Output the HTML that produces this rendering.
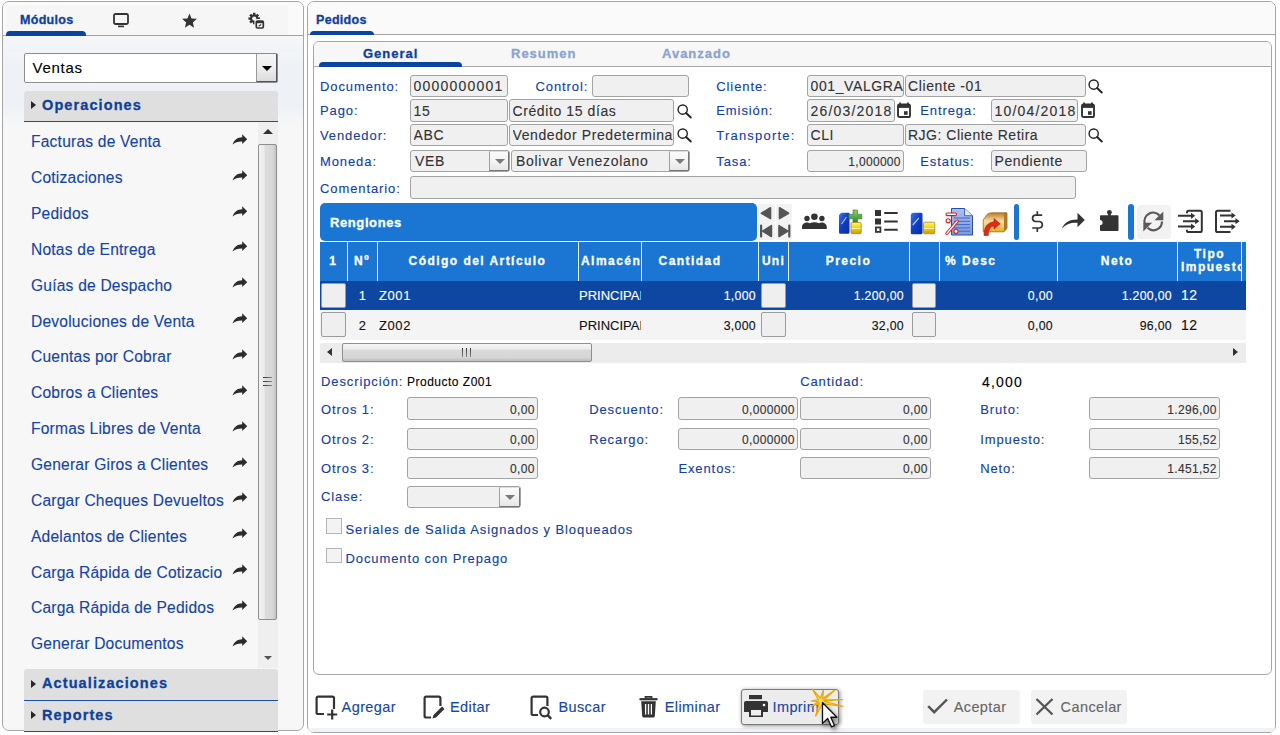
<!DOCTYPE html>
<html><head><meta charset="utf-8"><style>
*{box-sizing:border-box}
html,body{margin:0;padding:0}
body{width:1280px;height:735px;overflow:hidden;background:#fff;font-family:"Liberation Sans",sans-serif;position:relative}
.a{position:absolute}
.t{position:absolute;white-space:nowrap;line-height:1;-webkit-text-stroke:0.12px currentColor}
svg{position:absolute;overflow:visible}
.lbl{color:#1040a8}
.inp{background:#f0f0f0;border:1px solid #a3a3a3;border-radius:3px}
.cb{background:#efefef;border:1px solid #9c9c9c;border-radius:2px}
</style></head><body>
<div class="a " style="left:2px;top:1px;width:302px;height:730px;border:1px solid #a6a6a6;border-radius:7px;background:#f7f7f7;"></div>
<div class="a " style="left:3px;top:36px;width:300px;height:89px;background:linear-gradient(#f5f7f9 0%,#eef2f6 35%,#eef2f6 80%,#f7f7f7 100%);"></div>
<div class="a " style="left:3px;top:2px;width:300px;height:33px;background:#fafafa;border-radius:6px 6px 0 0;"></div>
<div class="a " style="left:6px;top:5px;width:80px;height:30px;background:#f6f6f6;"></div>
<div class="a " style="left:86px;top:5px;width:68px;height:30px;background:#f6f6f6;"></div>
<div class="a " style="left:154px;top:5px;width:69px;height:30px;background:#f6f6f6;"></div>
<div class="a " style="left:223px;top:5px;width:65px;height:30px;background:#f6f6f6;"></div>
<div class="a " style="left:3px;top:35px;width:300px;height:1px;background:#a3a3a3;"></div>
<div class="a " style="left:6px;top:31px;width:80px;height:5px;background:#0b44a0;border-radius:4px 4px 0 0;"></div>
<div class="t " style="left:20.00px;top:14.02px;font-size:12.5px;color:#0f3f9c;font-weight:bold;-webkit-text-stroke:0.3px currentColor;letter-spacing:0.3px;">Módulos</div>
<svg style="left:113px;top:13px" width="16" height="15" viewBox="0 0 16 15"><rect x="1" y="1" width="14" height="10" rx="1.5" fill="none" stroke="#333" stroke-width="1.8"/><rect x="5" y="12.6" width="6" height="1.6" fill="#333"/></svg>
<svg style="left:181px;top:12px" width="17" height="17" viewBox="0 0 24 24"><path d="M12 2l2.9 7.1 7.6.6-5.8 5 1.8 7.4L12 18.1 5.5 22.1l1.8-7.4-5.8-5 7.6-.6z" fill="#333"/></svg>
<svg style="left:248px;top:12px" width="17" height="17" viewBox="0 0 17 17"><path d="M10.34 5.45 L11.96 5.34 L11.96 7.86 L10.34 7.75 L9.94 8.72 L11.17 9.78 L9.38 11.57 L8.32 10.34 L7.35 10.74 L7.46 12.36 L4.94 12.36 L5.05 10.74 L4.08 10.34 L3.02 11.57 L1.23 9.78 L2.46 8.72 L2.06 7.75 L0.44 7.86 L0.44 5.34 L2.06 5.45 L2.46 4.48 L1.23 3.42 L3.02 1.63 L4.08 2.86 L5.05 2.46 L4.94 0.84 L7.46 0.84 L7.35 2.46 L8.32 2.86 L9.38 1.63 L11.17 3.42 L9.94 4.48Z" fill="#333"/><circle cx="6.2" cy="6.6" r="2.1" fill="#f3f3f3"/><rect x="7.5" y="8.2" width="8.6" height="8.6" rx="1.5" fill="#f3f3f3" stroke="#f3f3f3" stroke-width="2.2"/><rect x="8.3" y="9" width="7" height="7" rx="1.2" fill="#fff" stroke="#333" stroke-width="1.7"/><rect x="8.3" y="9" width="7" height="2.2" fill="#333"/><path d="M10.6 14.2l2.6-1.6" stroke="#333" stroke-width="1.2"/></svg>
<div class="a " style="left:24px;top:53px;width:254px;height:30px;background:#fff;border:1px solid #8d8d8d;border-radius:2px;"></div>
<div class="a " style="left:256px;top:54px;width:21px;height:28px;background:linear-gradient(#f4f4f4,#f0f0f0 45%,#dcdcdc);border-left:1px solid #9a9a9a;border-right:1px solid #555;border-bottom:1px solid #555;"></div>
<div class="a" style="left:262px;top:66px;width:0;height:0;border-left:5px solid transparent;border-right:5px solid transparent;border-top:5px solid #000"></div>
<div class="t " style="left:32.50px;top:60.20px;font-size:15px;color:#000;letter-spacing:0.75px;">Ventas</div>
<div class="a " style="left:24px;top:91px;width:254px;height:31px;background:#dfdfdf;border-radius:3px 3px 0 0;"></div>
<div class="a " style="left:24px;top:121px;width:254px;height:1px;background:#1b4ea6;"></div>
<div class="a" style="left:31px;top:101px;width:0;height:0;border-top:4.5px solid transparent;border-bottom:4.5px solid transparent;border-left:5px solid #262626"></div>
<div class="t " style="left:42.00px;top:97.73px;font-size:14.5px;color:#0f3f9c;font-weight:bold;-webkit-text-stroke:0.3px currentColor;letter-spacing:1.1px;">Operaciones</div>
<div class="t " style="left:31.00px;top:134.39px;font-size:15.6px;color:#1444a6;letter-spacing:0.2px;">Facturas de Venta</div>
<svg style="left:232px;top:133.8px" width="16" height="11" viewBox="0 0 16 11"><path d="M0.5 10.5C2 6 5.5 3.2 10.2 3.2V0.2L15.2 5.3 10.2 9.9V7.4C6 7.3 3 8.3 0.5 10.5z" fill="#2b2b2b"/></svg>
<div class="t " style="left:31.00px;top:170.24px;font-size:15.6px;color:#1444a6;letter-spacing:0.2px;">Cotizaciones</div>
<svg style="left:232px;top:169.7px" width="16" height="11" viewBox="0 0 16 11"><path d="M0.5 10.5C2 6 5.5 3.2 10.2 3.2V0.2L15.2 5.3 10.2 9.9V7.4C6 7.3 3 8.3 0.5 10.5z" fill="#2b2b2b"/></svg>
<div class="t " style="left:31.00px;top:206.09px;font-size:15.6px;color:#1444a6;letter-spacing:0.2px;">Pedidos</div>
<svg style="left:232px;top:205.5px" width="16" height="11" viewBox="0 0 16 11"><path d="M0.5 10.5C2 6 5.5 3.2 10.2 3.2V0.2L15.2 5.3 10.2 9.9V7.4C6 7.3 3 8.3 0.5 10.5z" fill="#2b2b2b"/></svg>
<div class="t " style="left:31.00px;top:241.94px;font-size:15.6px;color:#1444a6;letter-spacing:0.2px;">Notas de Entrega</div>
<svg style="left:232px;top:241.4px" width="16" height="11" viewBox="0 0 16 11"><path d="M0.5 10.5C2 6 5.5 3.2 10.2 3.2V0.2L15.2 5.3 10.2 9.9V7.4C6 7.3 3 8.3 0.5 10.5z" fill="#2b2b2b"/></svg>
<div class="t " style="left:31.00px;top:277.79px;font-size:15.6px;color:#1444a6;letter-spacing:0.2px;">Guías de Despacho</div>
<svg style="left:232px;top:277.2px" width="16" height="11" viewBox="0 0 16 11"><path d="M0.5 10.5C2 6 5.5 3.2 10.2 3.2V0.2L15.2 5.3 10.2 9.9V7.4C6 7.3 3 8.3 0.5 10.5z" fill="#2b2b2b"/></svg>
<div class="t " style="left:31.00px;top:313.64px;font-size:15.6px;color:#1444a6;letter-spacing:0.2px;">Devoluciones de Venta</div>
<svg style="left:232px;top:313.1px" width="16" height="11" viewBox="0 0 16 11"><path d="M0.5 10.5C2 6 5.5 3.2 10.2 3.2V0.2L15.2 5.3 10.2 9.9V7.4C6 7.3 3 8.3 0.5 10.5z" fill="#2b2b2b"/></svg>
<div class="t " style="left:31.00px;top:349.49px;font-size:15.6px;color:#1444a6;letter-spacing:0.2px;">Cuentas por Cobrar</div>
<svg style="left:232px;top:348.9px" width="16" height="11" viewBox="0 0 16 11"><path d="M0.5 10.5C2 6 5.5 3.2 10.2 3.2V0.2L15.2 5.3 10.2 9.9V7.4C6 7.3 3 8.3 0.5 10.5z" fill="#2b2b2b"/></svg>
<div class="t " style="left:31.00px;top:385.34px;font-size:15.6px;color:#1444a6;letter-spacing:0.2px;">Cobros a Clientes</div>
<svg style="left:232px;top:384.8px" width="16" height="11" viewBox="0 0 16 11"><path d="M0.5 10.5C2 6 5.5 3.2 10.2 3.2V0.2L15.2 5.3 10.2 9.9V7.4C6 7.3 3 8.3 0.5 10.5z" fill="#2b2b2b"/></svg>
<div class="t " style="left:31.00px;top:421.19px;font-size:15.6px;color:#1444a6;letter-spacing:0.2px;">Formas Libres de Venta</div>
<svg style="left:232px;top:420.6px" width="16" height="11" viewBox="0 0 16 11"><path d="M0.5 10.5C2 6 5.5 3.2 10.2 3.2V0.2L15.2 5.3 10.2 9.9V7.4C6 7.3 3 8.3 0.5 10.5z" fill="#2b2b2b"/></svg>
<div class="t " style="left:31.00px;top:457.04px;font-size:15.6px;color:#1444a6;letter-spacing:0.2px;">Generar Giros a Clientes</div>
<svg style="left:232px;top:456.5px" width="16" height="11" viewBox="0 0 16 11"><path d="M0.5 10.5C2 6 5.5 3.2 10.2 3.2V0.2L15.2 5.3 10.2 9.9V7.4C6 7.3 3 8.3 0.5 10.5z" fill="#2b2b2b"/></svg>
<div class="t " style="left:31.00px;top:492.89px;font-size:15.6px;color:#1444a6;letter-spacing:0.2px;">Cargar Cheques Devueltos</div>
<svg style="left:232px;top:492.3px" width="16" height="11" viewBox="0 0 16 11"><path d="M0.5 10.5C2 6 5.5 3.2 10.2 3.2V0.2L15.2 5.3 10.2 9.9V7.4C6 7.3 3 8.3 0.5 10.5z" fill="#2b2b2b"/></svg>
<div class="t " style="left:31.00px;top:528.74px;font-size:15.6px;color:#1444a6;letter-spacing:0.2px;">Adelantos de Clientes</div>
<svg style="left:232px;top:528.2px" width="16" height="11" viewBox="0 0 16 11"><path d="M0.5 10.5C2 6 5.5 3.2 10.2 3.2V0.2L15.2 5.3 10.2 9.9V7.4C6 7.3 3 8.3 0.5 10.5z" fill="#2b2b2b"/></svg>
<div class="t " style="left:31.00px;top:564.59px;font-size:15.6px;color:#1444a6;letter-spacing:0.2px;">Carga Rápida de Cotizacio</div>
<svg style="left:232px;top:564.0px" width="16" height="11" viewBox="0 0 16 11"><path d="M0.5 10.5C2 6 5.5 3.2 10.2 3.2V0.2L15.2 5.3 10.2 9.9V7.4C6 7.3 3 8.3 0.5 10.5z" fill="#2b2b2b"/></svg>
<div class="t " style="left:31.00px;top:600.44px;font-size:15.6px;color:#1444a6;letter-spacing:0.2px;">Carga Rápida de Pedidos</div>
<svg style="left:232px;top:599.9px" width="16" height="11" viewBox="0 0 16 11"><path d="M0.5 10.5C2 6 5.5 3.2 10.2 3.2V0.2L15.2 5.3 10.2 9.9V7.4C6 7.3 3 8.3 0.5 10.5z" fill="#2b2b2b"/></svg>
<div class="t " style="left:31.00px;top:636.29px;font-size:15.6px;color:#1444a6;letter-spacing:0.2px;">Generar Documentos</div>
<svg style="left:232px;top:635.7px" width="16" height="11" viewBox="0 0 16 11"><path d="M0.5 10.5C2 6 5.5 3.2 10.2 3.2V0.2L15.2 5.3 10.2 9.9V7.4C6 7.3 3 8.3 0.5 10.5z" fill="#2b2b2b"/></svg>
<div class="a " style="left:258px;top:122px;width:20px;height:546px;background:#efefef;"></div>
<div class="a" style="left:263px;top:129px;width:0;height:0;border-left:5px solid transparent;border-right:5px solid transparent;border-bottom:5px solid #333"></div>
<div class="a " style="left:258px;top:144px;width:19px;height:476px;background:linear-gradient(90deg,#f2f2f2,#ececec 30%,#dcdcdc 36%,#d8d8d8 80%,#c6c6c6 95%);border:1px solid #8f8f8f;border-radius:2px;"></div>
<div class="a " style="left:263px;top:377px;width:9px;height:1px;background:linear-gradient(90deg,#333,#888);"></div>
<div class="a " style="left:263px;top:381px;width:9px;height:1px;background:linear-gradient(90deg,#333,#888);"></div>
<div class="a " style="left:263px;top:385px;width:9px;height:1px;background:linear-gradient(90deg,#333,#888);"></div>
<div class="a" style="left:263.5px;top:656px;width:0;height:0;border-left:4.5px solid transparent;border-right:4.5px solid transparent;border-top:4.5px solid #555"></div>
<div class="a " style="left:24px;top:669px;width:254px;height:32px;background:#dfdfdf;border-radius:3px 3px 0 0;"></div>
<div class="a " style="left:24px;top:700px;width:254px;height:1px;background:#1b4ea6;"></div>
<div class="a" style="left:31px;top:679.6px;width:0;height:0;border-top:4.5px solid transparent;border-bottom:4.5px solid transparent;border-left:5px solid #262626"></div>
<div class="t " style="left:42.00px;top:676.33px;font-size:14.5px;color:#0f3f9c;font-weight:bold;-webkit-text-stroke:0.3px currentColor;letter-spacing:1.1px;">Actualizaciones</div>
<div class="a " style="left:24px;top:701px;width:254px;height:31px;background:#dfdfdf;border-radius:3px 3px 0 0;"></div>
<div class="a " style="left:24px;top:731px;width:254px;height:1px;background:#1b4ea6;"></div>
<div class="a" style="left:31px;top:711.4px;width:0;height:0;border-top:4.5px solid transparent;border-bottom:4.5px solid transparent;border-left:5px solid #262626"></div>
<div class="t " style="left:42.00px;top:708.13px;font-size:14.5px;color:#0f3f9c;font-weight:bold;-webkit-text-stroke:0.3px currentColor;letter-spacing:1.1px;">Reportes</div>
<div class="a " style="left:307px;top:1px;width:969px;height:732px;border:1px solid #a6a6a6;border-radius:7px;background:#fff;"></div>
<div class="a " style="left:308px;top:2px;width:967px;height:32px;background:#fafafa;border-radius:6px 6px 0 0;"></div>
<div class="a " style="left:308px;top:34px;width:967px;height:1px;background:#a3a3a3;"></div>
<div class="a " style="left:308px;top:728px;width:967px;height:4px;background:#eff2f6;border-radius:0 0 6px 6px;"></div>
<div class="a " style="left:310px;top:31px;width:64px;height:4px;background:#0b44a0;border-radius:4px 4px 0 0;"></div>
<div class="t " style="left:316.00px;top:14.02px;font-size:12.5px;color:#0f3f9c;font-weight:bold;-webkit-text-stroke:0.3px currentColor;letter-spacing:0.3px;">Pedidos</div>
<div class="a " style="left:313px;top:41px;width:959px;height:634px;border:1px solid #a6a6a6;border-radius:6px;background:#fff;"></div>
<div class="a " style="left:314px;top:42px;width:957px;height:24px;background:#f7f7f7;border-radius:5px 5px 0 0;"></div>
<div class="a " style="left:314px;top:66px;width:957px;height:1px;background:#a8a8a8;"></div>
<div class="a " style="left:319px;top:62px;width:143px;height:5px;background:#0b44a0;border-radius:4px 4px 0 0;"></div>
<div class="t " style="left:363.00px;top:46.80px;font-size:13px;color:#0f3f9c;font-weight:bold;-webkit-text-stroke:0.3px currentColor;letter-spacing:1.0px;">General</div>
<div class="t " style="left:511.00px;top:46.80px;font-size:13px;color:#8aa3d1;font-weight:bold;-webkit-text-stroke:0.3px currentColor;letter-spacing:1.0px;">Resumen</div>
<div class="t " style="left:662.00px;top:46.80px;font-size:13px;color:#8aa3d1;font-weight:bold;-webkit-text-stroke:0.3px currentColor;letter-spacing:1.0px;">Avanzado</div>
<div class="t lbl" style="left:320.00px;top:80.00px;font-size:13px;letter-spacing:0.9px;">Documento:</div>
<div class="t lbl" style="left:320.00px;top:104.00px;font-size:13px;letter-spacing:0.9px;">Pago:</div>
<div class="t lbl" style="left:320.00px;top:128.80px;font-size:13px;letter-spacing:0.9px;">Vendedor:</div>
<div class="t lbl" style="left:320.00px;top:154.70px;font-size:13px;letter-spacing:0.9px;">Moneda:</div>
<div class="t lbl" style="left:320.00px;top:182.00px;font-size:13px;letter-spacing:0.9px;">Comentario:</div>
<div class="t lbl" style="left:535.50px;top:80.00px;font-size:13px;letter-spacing:0.9px;">Control:</div>
<div class="t lbl" style="left:716.30px;top:80.00px;font-size:13px;letter-spacing:0.9px;">Cliente:</div>
<div class="t lbl" style="left:716.30px;top:104.00px;font-size:13px;letter-spacing:0.9px;">Emisión:</div>
<div class="t lbl" style="left:716.30px;top:128.80px;font-size:13px;letter-spacing:1.2px;">Transporte:</div>
<div class="t lbl" style="left:716.30px;top:154.70px;font-size:13px;letter-spacing:0.9px;">Tasa:</div>
<div class="t lbl" style="left:920.30px;top:104.00px;font-size:13px;letter-spacing:0.9px;">Entrega:</div>
<div class="t lbl" style="left:920.30px;top:154.70px;font-size:13px;letter-spacing:0.9px;">Estatus:</div>
<div class="a inp" style="left:410px;top:75px;width:98px;height:22px;"></div>
<div class="t " style="left:413.50px;top:77.39px;font-size:14px;line-height:1.4;width:93px;overflow:hidden;color:#333333;letter-spacing:1.2px;">0000000001</div>
<div class="a inp" style="left:592px;top:75px;width:97px;height:22px;"></div>
<div class="a inp" style="left:807px;top:75px;width:97px;height:22px;"></div>
<div class="t " style="left:810.50px;top:77.39px;font-size:14px;line-height:1.4;width:92px;overflow:hidden;color:#333333;letter-spacing:0.6px;">001_VALGRA</div>
<div class="a inp" style="left:905px;top:75px;width:181px;height:22px;"></div>
<div class="t " style="left:908.00px;top:77.39px;font-size:14px;line-height:1.4;width:176px;overflow:hidden;color:#333333;letter-spacing:0.6px;">Cliente -01</div>
<svg style="left:1088px;top:79px" width="15" height="14" viewBox="0 0 15 14"><circle cx="5.7" cy="5.6" r="4.6" fill="none" stroke="#222" stroke-width="1.4"/><path d="M9.1 9L13.8 13.5" stroke="#222" stroke-width="1.9" stroke-linecap="round"/></svg>
<div class="a inp" style="left:410px;top:99px;width:98px;height:23px;"></div>
<div class="t " style="left:413.50px;top:101.89px;font-size:14px;line-height:1.4;width:93px;overflow:hidden;color:#333333;letter-spacing:0.6px;">15</div>
<div class="a inp" style="left:509px;top:99px;width:165px;height:23px;"></div>
<div class="t " style="left:512.50px;top:101.89px;font-size:14px;line-height:1.4;width:160px;overflow:hidden;color:#333333;letter-spacing:0.6px;">Crédito 15 días</div>
<svg style="left:677px;top:104px" width="15" height="14" viewBox="0 0 15 14"><circle cx="5.7" cy="5.6" r="4.6" fill="none" stroke="#222" stroke-width="1.4"/><path d="M9.1 9L13.8 13.5" stroke="#222" stroke-width="1.9" stroke-linecap="round"/></svg>
<div class="a inp" style="left:807px;top:99px;width:88px;height:23px;"></div>
<div class="t " style="left:810.50px;top:101.89px;font-size:14px;line-height:1.4;width:83px;overflow:hidden;color:#333333;letter-spacing:1.2px;">26/03/2018</div>
<svg style="left:897px;top:102px" width="14" height="16" viewBox="0 0 14 16"><path d="M3 0.5v2.5M11 0.5v2.5" stroke="#333" stroke-width="1.8"/><rect x="1" y="2.5" width="12" height="12.5" rx="1.6" fill="none" stroke="#333" stroke-width="1.9"/><rect x="1" y="2.5" width="12" height="3.4" fill="#333"/><rect x="7" y="9.2" width="3.6" height="3.6" fill="#333"/></svg>
<div class="a inp" style="left:991px;top:99px;width:87px;height:23px;"></div>
<div class="t " style="left:994.50px;top:101.89px;font-size:14px;line-height:1.4;width:82px;overflow:hidden;color:#333333;letter-spacing:1.2px;">10/04/2018</div>
<svg style="left:1081px;top:102px" width="14" height="16" viewBox="0 0 14 16"><path d="M3 0.5v2.5M11 0.5v2.5" stroke="#333" stroke-width="1.8"/><rect x="1" y="2.5" width="12" height="12.5" rx="1.6" fill="none" stroke="#333" stroke-width="1.9"/><rect x="1" y="2.5" width="12" height="3.4" fill="#333"/><rect x="7" y="9.2" width="3.6" height="3.6" fill="#333"/></svg>
<div class="a inp" style="left:410px;top:124px;width:98px;height:22px;"></div>
<div class="t " style="left:413.50px;top:126.39px;font-size:14px;line-height:1.4;width:93px;overflow:hidden;color:#333333;letter-spacing:0.6px;">ABC</div>
<div class="a inp" style="left:509px;top:124px;width:165px;height:22px;"></div>
<div class="t " style="left:512.50px;top:126.39px;font-size:14px;line-height:1.4;width:160px;overflow:hidden;color:#333333;letter-spacing:0.6px;">Vendedor Predeterminado</div>
<svg style="left:677px;top:128px" width="15" height="14" viewBox="0 0 15 14"><circle cx="5.7" cy="5.6" r="4.6" fill="none" stroke="#222" stroke-width="1.4"/><path d="M9.1 9L13.8 13.5" stroke="#222" stroke-width="1.9" stroke-linecap="round"/></svg>
<div class="a inp" style="left:807px;top:124px;width:97px;height:22px;"></div>
<div class="t " style="left:810.50px;top:126.39px;font-size:14px;line-height:1.4;width:92px;overflow:hidden;color:#333333;letter-spacing:0.6px;">CLI</div>
<div class="a inp" style="left:905px;top:124px;width:181px;height:22px;"></div>
<div class="t " style="left:908.00px;top:126.39px;font-size:14px;line-height:1.4;width:176px;overflow:hidden;color:#333333;letter-spacing:0.5px;">RJG: Cliente Retira</div>
<svg style="left:1088px;top:128px" width="15" height="14" viewBox="0 0 15 14"><circle cx="5.7" cy="5.6" r="4.6" fill="none" stroke="#222" stroke-width="1.4"/><path d="M9.1 9L13.8 13.5" stroke="#222" stroke-width="1.9" stroke-linecap="round"/></svg>
<div class="a inp" style="left:410px;top:150px;width:100px;height:22px;"></div>
<div class="a " style="left:489px;top:151px;width:20px;height:20px;background:linear-gradient(#fafafa,#f4f4f4 50%,#e6e6e6);border-left:1px solid #9f9f9f;border-right:1px solid #777;border-bottom:1px solid #777;border-top:1px solid #ddd;"></div>
<div class="a" style="left:494.5px;top:158.5px;width:0;height:0;border-left:5px solid transparent;border-right:5px solid transparent;border-top:5.5px solid #7a7a7a"></div>
<div class="t " style="left:415.00px;top:154.15px;font-size:14px;color:#333333;letter-spacing:0.7px;">VEB</div>
<div class="a inp" style="left:511px;top:150px;width:179px;height:22px;"></div>
<div class="a " style="left:669px;top:151px;width:20px;height:20px;background:linear-gradient(#fafafa,#f4f4f4 50%,#e6e6e6);border-left:1px solid #9f9f9f;border-right:1px solid #777;border-bottom:1px solid #777;border-top:1px solid #ddd;"></div>
<div class="a" style="left:674.5px;top:158.5px;width:0;height:0;border-left:5px solid transparent;border-right:5px solid transparent;border-top:5.5px solid #7a7a7a"></div>
<div class="t " style="left:516.00px;top:154.15px;font-size:14px;color:#333333;letter-spacing:0.7px;">Bolivar Venezolano</div>
<div class="a inp" style="left:807px;top:150px;width:97px;height:22px;"></div>
<div class="t " style="right:379.20px;top:156.16px;font-size:12px;color:#333333;letter-spacing:0.3px;">1,000000</div>
<div class="a inp" style="left:991px;top:150px;width:96px;height:22px;"></div>
<div class="t " style="left:994.50px;top:152.39px;font-size:14px;line-height:1.4;width:91px;overflow:hidden;color:#333333;letter-spacing:0.6px;">Pendiente</div>
<div class="a inp" style="left:410px;top:176px;width:666px;height:23px;"></div>
<div class="a " style="left:320px;top:203px;width:437px;height:38px;background:#1b76d3;border-radius:5px;"></div>
<div class="t " style="left:330.00px;top:215.90px;font-size:13px;color:#fff;font-weight:bold;-webkit-text-stroke:0.3px currentColor;letter-spacing:0.6px;">Renglones</div>
<div class="a " style="left:758px;top:204px;width:16.5px;height:17.5px;background:#f2f2f2;border-radius:2px;"></div>
<div class="a " style="left:775.5px;top:204px;width:16.5px;height:17.5px;background:#f2f2f2;border-radius:2px;"></div>
<div class="a " style="left:758px;top:222px;width:16.5px;height:17.5px;background:#f2f2f2;border-radius:2px;"></div>
<div class="a " style="left:775.5px;top:222px;width:16.5px;height:17.5px;background:#f2f2f2;border-radius:2px;"></div>
<svg style="left:758px;top:204px" width="34" height="36" viewBox="0 0 34 36"><g fill="#555" stroke="#555" stroke-width="1.6" stroke-linejoin="round"><path d="M12.5 3.8v10.8L3.4 9.2z"/><path d="M21.5 3.8v10.8l9.1-5.4z"/><path d="M13.4 21.7v10.8L4.6 27.1z"/><path d="M21 21.7v10.8l9-5.4z"/></g><path d="M3.1 21.6v11M31.3 21.6v11" stroke="#555" stroke-width="2.2" stroke-linecap="round"/></svg>
<svg style="left:801px;top:213px" width="27" height="17" viewBox="0 0 27 17"><circle cx="6" cy="5.5" r="2.7" fill="#333"/><circle cx="13.4" cy="3.8" r="3.3" fill="#333"/><circle cx="20.9" cy="5.5" r="2.7" fill="#333"/><path d="M1 16V14.3C1 11.4 3.3 9.6 6.2 9.6c1 0 1.9.2 2.6.6C10 9.6 11.6 9.3 13.4 9.3s3.4.3 4.6.9c.7-.4 1.6-.6 2.6-.6 2.9 0 5.2 1.8 5.2 4.7V16z" fill="#333"/></svg>
<svg style="left:0;top:0" width="0" height="0"><defs>
<linearGradient id="gb" x1="0" y1="0" x2="1" y2="1"><stop offset="0" stop-color="#3a78f0"/><stop offset=".45" stop-color="#1140c8"/><stop offset="1" stop-color="#0a2c98"/></linearGradient>
<linearGradient id="gy" x1="0" y1="0" x2="0" y2="1"><stop offset="0" stop-color="#fff27a"/><stop offset=".5" stop-color="#f4d400"/><stop offset="1" stop-color="#c89a10"/></linearGradient>
<linearGradient id="gg" x1="0" y1="0" x2="0" y2="1"><stop offset="0" stop-color="#8ed46a"/><stop offset="1" stop-color="#2f8a2a"/></linearGradient>
<linearGradient id="go" x1="0" y1="0" x2="0" y2="1"><stop offset="0" stop-color="#c07a28"/><stop offset=".45" stop-color="#f6e0a0"/><stop offset="1" stop-color="#e8b020"/></linearGradient>
<linearGradient id="gd" x1="0" y1="0" x2="0" y2="1"><stop offset="0" stop-color="#a9c0f0"/><stop offset="1" stop-color="#7b9be0"/></linearGradient>
</defs></svg>
<svg style="left:838px;top:209px" width="26" height="26" viewBox="0 0 26 26"><path d="M2.5 4.5Q3 3.8 5 3.8h5.5Q11.5 3.8 11.5 5v18.5q0 1.3-1.5 1.3H2.3Q1 24.8 1 23.5V6z" fill="url(#gb)"/><path d="M3.5 15l5-7" stroke="#a8c8ff" stroke-width="1.2"/><path d="M15 1h4.5v4.3h4.3v4.5h-4.3v3.2H15V9.8h-4.2V5.3H15z" fill="url(#gg)" stroke="#2c6f2a" stroke-width=".6"/><rect x="13" y="13.5" width="10.2" height="11.2" rx="1.2" fill="url(#gy)" stroke="#a8842a" stroke-width=".8"/><path d="M13.5 19.5h9" stroke="#fff6b0" stroke-width="1"/></svg>
<svg style="left:875px;top:210px" width="23" height="23" viewBox="0 0 23 23"><rect x="0" y="0" width="6" height="6" fill="#333"/><rect x="0" y="8.5" width="6" height="6" fill="#333"/><rect x="0.9" y="17.4" width="4.5" height="4.5" fill="none" stroke="#333" stroke-width="1.8"/><path d="M9.2 3h13.5M9.2 11.5h13.5M9.2 19.8h13.5" stroke="#333" stroke-width="2"/></svg>
<svg style="left:910px;top:212px" width="26" height="23" viewBox="0 0 26 23"><path d="M1.5 1.6Q2 .8 4 .8h6.5Q12.5 .8 12.5 2.2v18.8q0 1.3-1.5 1.3H2.3Q.8 22.3.8 21V3z" fill="url(#gb)"/><path d="M2.8 13l6-7" stroke="#a8c8ff" stroke-width="1.2"/><rect x="13.5" y="10.2" width="11.3" height="11.6" rx="1.2" fill="url(#gy)" stroke="#a8842a" stroke-width=".8"/><path d="M14 16.5h10" stroke="#fff6b0" stroke-width="1"/></svg>
<svg style="left:945px;top:208px" width="29" height="28" viewBox="0 0 29 28"><path d="M6.5 .5h13l8 7.2v19.3h-21z" fill="url(#gd)" stroke="#2a4ea8" stroke-width="1"/><path d="M19.5 .5v7.2h8" fill="#dfe8fb" stroke="#2a4ea8" stroke-width=".8"/><path d="M9 10h16M9 13.3h16M9 16.6h16M9 19.9h16M9 23.2h16" stroke="#3a5ec0" stroke-width=".9"/><rect x="1" y="5" width="10.5" height="2.6" rx="1.2" fill="#fff" stroke="#d02020" stroke-width="1.1"/><circle cx="3.2" cy="12.8" r="2.1" fill="#fff" stroke="#d02020" stroke-width="1.1"/><circle cx="11" cy="23.3" r="2.1" fill="#fff" stroke="#d02020" stroke-width="1.1"/><path d="M1.8 25.5L12.3 13.2" stroke="#d02020" stroke-width="3.2" stroke-linecap="round"/><path d="M1.8 25.5L12.3 13.2" stroke="#fff" stroke-width="1.3" stroke-linecap="round"/></svg>
<svg style="left:982px;top:212px" width="26" height="24" viewBox="0 0 26 24"><path d="M5 2.5Q7 .8 10 .8h15v15.5l-3 3.5H1.2V8z" fill="url(#go)" stroke="#9a6a20" stroke-width=".8"/><path d="M22 .8l3 0v15.5l-3 3.5z" fill="#b07828"/><path d="M2 23.5C2 16 5 10.5 12 9.8V6.6l6.2 5.2-6.2 5.2v-3C8 14.3 6.3 18 6.3 23.5z" fill="#e02a1a" stroke="#b01810" stroke-width=".6"/></svg>
<div class="a " style="left:1014px;top:204px;width:5px;height:36px;background:#1b76d3;border-radius:3px;"></div>
<div class="a " style="left:1128px;top:204px;width:6px;height:36px;background:#1b76d3;border-radius:3px;"></div>
<svg style="left:1031px;top:211px" width="13" height="21" viewBox="0 0 13 21"><path d="M11.2 4.2H4.2A3.2 3.2 0 0 0 4.2 10.5H8.6A3.3 3.3 0 0 1 8.6 17H1.2" fill="none" stroke="#333" stroke-width="1.7"/><path d="M6.3 .3v3.9M6.3 17v3.9" stroke="#333" stroke-width="1.7"/></svg>
<svg style="left:1062px;top:212px" width="23" height="17" viewBox="0 0 23 17"><path d="M0 16.5C2.5 10.5 7.5 7.5 15.5 7.6V.8L22.8 8 15.5 15.3V10.7C8.5 10.4 3.8 12.3 0 16.5z" fill="#333"/></svg>
<svg style="left:1100px;top:209px" width="19" height="22" viewBox="0 0 19 22"><circle cx="9.4" cy="3.3" r="2.4" fill="#333"/><rect x="8.1" y="4" width="2.6" height="3.5" fill="#333"/><path d="M1 6.2h16.5q1 0 1 1V21q0 .9-1 .9H1q-1 0-1-.9v-4.8a2.6 2.6 0 0 0 0-5.2V7.2q0-1 1-1z" fill="#333"/></svg>
<div class="a " style="left:1137px;top:205px;width:34px;height:34px;background:#f2f2f2;border-radius:4px;"></div>
<svg style="left:1142px;top:210px" width="23" height="23" viewBox="0 0 23 23"><path d="M2.8 13.5A8.6 8.6 0 0 1 17.5 5.5" fill="none" stroke="#5a5a5a" stroke-width="2.2"/><path d="M21.3 1.5v8.8h-8.8z" fill="#5a5a5a"/><path d="M20 11.5A8.6 8.6 0 0 1 5.5 17.8" fill="none" stroke="#5a5a5a" stroke-width="2.2"/><path d="M1.3 21.5v-8.8h8.8z" fill="#5a5a5a"/></svg>
<svg style="left:1178px;top:210px" width="25" height="23" viewBox="0 0 25 23"><path d="M9 3.2V2.4Q9 .8 10.6 .8h11.6q1.6 0 1.6 1.6v18.1q0 1.6-1.6 1.6H10.6Q9 22.1 9 20.5v-.8" fill="none" stroke="#333" stroke-width="2"/><path d="M0 5.8h14M5 11.2h13.5M0 16.6h14" stroke="#333" stroke-width="2"/><path d="M13 2.7l4.2 3.1-4.2 3.1zM17.2 8.1l4.2 3.1-4.2 3.1zM13 13.5l4.2 3.1-4.2 3.1z" fill="#333"/></svg>
<svg style="left:1215px;top:210px" width="25" height="23" viewBox="0 0 25 23"><path d="M15.5 .8H2.6Q1 .8 1 2.4v18.1q0 1.6 1.6 1.6h12.9" fill="none" stroke="#333" stroke-width="2"/><path d="M5 5.5h12M9 11.2h12.5M5 16.8h12" stroke="#333" stroke-width="2"/><path d="M16.5 2.4l4.2 3.1-4.2 3.1zM20.5 8.1l4.2 3.1-4.2 3.1zM16.5 13.7l4.2 3.1-4.2 3.1z" fill="#333"/></svg>
<div class="a " style="left:320px;top:242px;width:926px;height:39px;background:#1b76d3;"></div>
<div class="a " style="left:347px;top:242px;width:1px;height:39px;background:#ffffff;opacity:0.9;"></div>
<div class="a " style="left:377px;top:242px;width:1px;height:39px;background:#ffffff;opacity:0.9;"></div>
<div class="a " style="left:578px;top:242px;width:1px;height:39px;background:#ffffff;opacity:0.9;"></div>
<div class="a " style="left:641px;top:242px;width:1px;height:39px;background:#ffffff;opacity:0.9;"></div>
<div class="a " style="left:758px;top:242px;width:1px;height:39px;background:#ffffff;opacity:0.9;"></div>
<div class="a " style="left:788px;top:242px;width:1px;height:39px;background:#ffffff;opacity:0.9;"></div>
<div class="a " style="left:909px;top:242px;width:1px;height:39px;background:#ffffff;opacity:0.9;"></div>
<div class="a " style="left:939px;top:242px;width:1px;height:39px;background:#ffffff;opacity:0.9;"></div>
<div class="a " style="left:1057px;top:242px;width:1px;height:39px;background:#ffffff;opacity:0.9;"></div>
<div class="a " style="left:1177px;top:242px;width:1px;height:39px;background:#ffffff;opacity:0.9;"></div>
<div class="a " style="left:1241px;top:242px;width:1px;height:39px;background:#ffffff;opacity:0.9;"></div>
<div class="t " style="left:132.50px;width:400px;text-align:center;top:254.84px;font-size:12px;color:#fff;font-weight:bold;-webkit-text-stroke:0.3px currentColor;">1</div>
<div class="t " style="left:162.00px;width:400px;text-align:center;top:254.84px;font-size:12px;color:#fff;font-weight:bold;-webkit-text-stroke:0.3px currentColor;letter-spacing:1.4px;">Nº</div>
<div class="t " style="left:277.50px;width:400px;text-align:center;top:254.84px;font-size:12px;color:#fff;font-weight:bold;-webkit-text-stroke:0.3px currentColor;letter-spacing:1.45px;">Código del Artículo</div>
<div class="a" style="left:579px;top:241px;width:62px;height:40px;overflow:hidden"><div class="t" style="left:2px;top:13.84px;font-size:12px;font-weight:bold;color:#fff;-webkit-text-stroke:0.3px #fff;letter-spacing:1.45px">Almacén</div></div>
<div class="t " style="left:490.00px;width:400px;text-align:center;top:254.84px;font-size:12px;color:#fff;font-weight:bold;-webkit-text-stroke:0.3px currentColor;letter-spacing:1.45px;">Cantidad</div>
<div class="t " style="left:762.00px;top:254.84px;font-size:12px;color:#fff;font-weight:bold;-webkit-text-stroke:0.3px currentColor;letter-spacing:1.2px;">Uni</div>
<div class="t " style="left:648.50px;width:400px;text-align:center;top:254.84px;font-size:12px;color:#fff;font-weight:bold;-webkit-text-stroke:0.3px currentColor;letter-spacing:1.45px;">Precio</div>
<div class="t " style="left:945.00px;top:254.84px;font-size:12px;color:#fff;font-weight:bold;-webkit-text-stroke:0.3px currentColor;letter-spacing:1.45px;">% Desc</div>
<div class="t " style="left:917.00px;width:400px;text-align:center;top:254.84px;font-size:12px;color:#fff;font-weight:bold;-webkit-text-stroke:0.3px currentColor;letter-spacing:1.45px;">Neto</div>
<div class="a" style="left:1178px;top:241px;width:63px;height:40px;overflow:hidden"><div class="t" style="left:0;width:63px;text-align:center;top:7.34px;font-size:12px;font-weight:bold;color:#fff;-webkit-text-stroke:0.3px #fff;letter-spacing:1.45px">Tipo</div><div class="t" style="left:3px;top:19.84px;font-size:12px;font-weight:bold;color:#fff;-webkit-text-stroke:0.3px #fff;letter-spacing:1.45px">Impuesto</div></div>
<div class="a " style="left:320px;top:281px;width:926px;height:29px;background:#0e47a1;"></div>
<div class="a " style="left:320px;top:310px;width:926px;height:30px;background:#f4f4f4;"></div>
<div class="a cb" style="left:321px;top:283px;width:25px;height:24.5px;"></div>
<div class="a cb" style="left:761px;top:283px;width:25px;height:24.5px;"></div>
<div class="a cb" style="left:912px;top:283px;width:24px;height:24.5px;"></div>
<div class="t " style="right:914.00px;top:289.20px;font-size:13px;color:#fff;letter-spacing:0px;">1</div>
<div class="t " style="left:379.00px;top:289.20px;font-size:13px;color:#fff;letter-spacing:0.6px;">Z001</div>
<div class="a" style="left:579px;top:281px;width:62px;height:29px;overflow:hidden"><div class="t" style="left:0;top:8.20px;font-size:13px;color:#fff;letter-spacing:0px">PRINCIPAL</div></div>
<div class="t " style="right:524.00px;top:289.79px;font-size:12.3px;color:#fff;letter-spacing:0.3px;">1,000</div>
<div class="t " style="right:376.00px;top:289.79px;font-size:12.3px;color:#fff;letter-spacing:0.3px;">1.200,00</div>
<div class="t " style="right:227.00px;top:289.79px;font-size:12.3px;color:#fff;letter-spacing:0.3px;">0,00</div>
<div class="t " style="right:108.00px;top:289.79px;font-size:12.3px;color:#fff;letter-spacing:0.3px;">1.200,00</div>
<div class="t " style="left:1181.00px;top:288.35px;font-size:14px;color:#fff;letter-spacing:0.4px;">12</div>
<div class="a cb" style="left:321px;top:312px;width:25px;height:24.5px;"></div>
<div class="a cb" style="left:761px;top:312px;width:25px;height:24.5px;"></div>
<div class="a cb" style="left:912px;top:312px;width:24px;height:24.5px;"></div>
<div class="t " style="right:914.00px;top:319.30px;font-size:13px;color:#111;letter-spacing:0px;">2</div>
<div class="t " style="left:379.00px;top:319.30px;font-size:13px;color:#111;letter-spacing:0.6px;">Z002</div>
<div class="a" style="left:579px;top:310px;width:62px;height:30px;overflow:hidden"><div class="t" style="left:0;top:9.30px;font-size:13px;color:#111;letter-spacing:0px">PRINCIPAL</div></div>
<div class="t " style="right:524.00px;top:319.89px;font-size:12.3px;color:#111;letter-spacing:0.3px;">3,000</div>
<div class="t " style="right:376.00px;top:319.89px;font-size:12.3px;color:#111;letter-spacing:0.3px;">32,00</div>
<div class="t " style="right:227.00px;top:319.89px;font-size:12.3px;color:#111;letter-spacing:0.3px;">0,00</div>
<div class="t " style="right:108.00px;top:319.89px;font-size:12.3px;color:#111;letter-spacing:0.3px;">96,00</div>
<div class="t " style="left:1181.00px;top:318.45px;font-size:14px;color:#111;letter-spacing:0.4px;">12</div>
<div class="a " style="left:320px;top:343px;width:926px;height:20px;background:#ececec;"></div>
<div class="a" style="left:327px;top:348px;width:0;height:0;border-top:4.5px solid transparent;border-bottom:4.5px solid transparent;border-right:5px solid #333"></div>
<div class="a " style="left:342px;top:343px;width:250px;height:19px;background:linear-gradient(#f6f6f6,#ececec 30%,#dadada 36%,#d6d6d6 80%,#c2c2c2 95%);border:1px solid #8f8f8f;border-radius:2px;"></div>
<div class="a " style="left:462px;top:348px;width:1px;height:9px;background:linear-gradient(#333,#888);"></div>
<div class="a " style="left:466px;top:348px;width:1px;height:9px;background:linear-gradient(#333,#888);"></div>
<div class="a " style="left:470px;top:348px;width:1px;height:9px;background:linear-gradient(#333,#888);"></div>
<div class="a" style="left:1233px;top:348px;width:0;height:0;border-top:4.5px solid transparent;border-bottom:4.5px solid transparent;border-left:5px solid #333"></div>
<div class="t lbl" style="left:321.00px;top:375.40px;font-size:13px;letter-spacing:0.9px;">Descripción:</div>
<div class="t " style="left:407.00px;top:376.24px;font-size:12px;color:#000;letter-spacing:0.5px;">Producto Z001</div>
<div class="t lbl" style="left:800.20px;top:375.40px;font-size:13px;letter-spacing:0.9px;">Cantidad:</div>
<div class="t " style="left:982.00px;top:374.95px;font-size:14px;color:#000;letter-spacing:1.2px;">4,000</div>
<div class="t lbl" style="left:321.00px;top:403.00px;font-size:13px;letter-spacing:0.9px;">Otros 1:</div>
<div class="a inp" style="left:407px;top:397px;width:131px;height:23px;"></div>
<div class="t " style="right:745.20px;top:403.66px;font-size:12px;color:#333333;letter-spacing:0.35px;">0,00</div>
<div class="a inp" style="left:800px;top:397px;width:131px;height:23px;"></div>
<div class="t " style="right:352.20px;top:403.66px;font-size:12px;color:#333333;letter-spacing:0.35px;">0,00</div>
<div class="a inp" style="left:1089px;top:397px;width:131px;height:23px;"></div>
<div class="t " style="right:63.20px;top:403.66px;font-size:12px;color:#333333;letter-spacing:0.35px;">1.296,00</div>
<div class="t lbl" style="left:980.20px;top:403.00px;font-size:13px;letter-spacing:0.9px;">Bruto:</div>
<div class="t lbl" style="left:321.00px;top:432.60px;font-size:13px;letter-spacing:0.9px;">Otros 2:</div>
<div class="a inp" style="left:407px;top:428px;width:131px;height:22px;"></div>
<div class="t " style="right:745.20px;top:434.16px;font-size:12px;color:#333333;letter-spacing:0.35px;">0,00</div>
<div class="a inp" style="left:800px;top:428px;width:131px;height:22px;"></div>
<div class="t " style="right:352.20px;top:434.16px;font-size:12px;color:#333333;letter-spacing:0.35px;">0,00</div>
<div class="a inp" style="left:1089px;top:428px;width:131px;height:22px;"></div>
<div class="t " style="right:63.20px;top:434.16px;font-size:12px;color:#333333;letter-spacing:0.35px;">155,52</div>
<div class="t lbl" style="left:980.20px;top:432.60px;font-size:13px;letter-spacing:0.9px;">Impuesto:</div>
<div class="t lbl" style="left:321.00px;top:461.60px;font-size:13px;letter-spacing:0.9px;">Otros 3:</div>
<div class="a inp" style="left:407px;top:457px;width:131px;height:22px;"></div>
<div class="t " style="right:745.20px;top:463.16px;font-size:12px;color:#333333;letter-spacing:0.35px;">0,00</div>
<div class="a inp" style="left:800px;top:457px;width:131px;height:22px;"></div>
<div class="t " style="right:352.20px;top:463.16px;font-size:12px;color:#333333;letter-spacing:0.35px;">0,00</div>
<div class="a inp" style="left:1089px;top:457px;width:131px;height:22px;"></div>
<div class="t " style="right:63.20px;top:463.16px;font-size:12px;color:#333333;letter-spacing:0.35px;">1.451,52</div>
<div class="t lbl" style="left:980.20px;top:461.60px;font-size:13px;letter-spacing:0.9px;">Neto:</div>
<div class="t lbl" style="left:589.20px;top:403.00px;font-size:13px;letter-spacing:0.9px;">Descuento:</div>
<div class="t lbl" style="left:589.20px;top:432.60px;font-size:13px;letter-spacing:0.9px;">Recargo:</div>
<div class="t lbl" style="left:678.40px;top:461.60px;font-size:13px;letter-spacing:0.9px;">Exentos:</div>
<div class="a inp" style="left:678px;top:397px;width:120px;height:23px;"></div>
<div class="t " style="right:485.20px;top:403.66px;font-size:12px;color:#333333;letter-spacing:0.35px;">0,000000</div>
<div class="a inp" style="left:678px;top:428px;width:120px;height:22px;"></div>
<div class="t " style="right:485.20px;top:434.16px;font-size:12px;color:#333333;letter-spacing:0.35px;">0,000000</div>
<div class="t lbl" style="left:321.00px;top:490.30px;font-size:13px;letter-spacing:0.9px;">Clase:</div>
<div class="a inp" style="left:407px;top:486px;width:114px;height:22px;"></div>
<div class="a " style="left:499px;top:487px;width:21px;height:20px;background:linear-gradient(#fafafa,#f4f4f4 50%,#e6e6e6);border-left:1px solid #9f9f9f;border-right:1px solid #777;border-bottom:1px solid #777;border-top:1px solid #ddd;"></div>
<div class="a" style="left:505.0px;top:494.5px;width:0;height:0;border-left:5px solid transparent;border-right:5px solid transparent;border-top:5.5px solid #7a7a7a"></div>
<div class="a " style="left:326px;top:518px;width:16px;height:16px;background:#f3f3f3;border:1px solid #b5b5b5;"></div>
<div class="t lbl" style="left:345.50px;top:523.00px;font-size:13px;letter-spacing:0.9px;">Seriales de Salida Asignados y Bloqueados</div>
<div class="a " style="left:326px;top:547.5px;width:16px;height:15.5px;background:#f3f3f3;border:1px solid #b5b5b5;"></div>
<div class="t lbl" style="left:345.50px;top:551.80px;font-size:13px;letter-spacing:0.9px;">Documento con Prepago</div>
<svg style="left:315px;top:695px" width="23" height="25" viewBox="0 0 23 25"><path d="M9 19H3.2a1.6 1.6 0 0 1-1.6-1.6V3.2A1.6 1.6 0 0 1 3.2 1.6h14.2a1.6 1.6 0 0 1 1.6 1.6V14" fill="none" stroke="#333" stroke-width="2.2"/><path d="M17.2 14.5v10M12.2 19.5h10" stroke="#333" stroke-width="2.2"/></svg>
<div class="t " style="left:341.60px;top:699.83px;font-size:14.5px;color:#1646a8;letter-spacing:0.4px;">Agregar</div>
<svg style="left:423px;top:695px" width="23" height="25" viewBox="0 0 23 25"><path d="M8 22.5H3.2a1.6 1.6 0 0 1-1.6-1.6V3.2A1.6 1.6 0 0 1 3.2 1.6h12.6a1.6 1.6 0 0 1 1.6 1.6V11" fill="none" stroke="#333" stroke-width="2.2"/><path d="M9.5 23.5l1-3.5 8.5-8.5 2.5 2.5-8.5 8.5z" fill="#333"/></svg>
<div class="t " style="left:450.00px;top:699.83px;font-size:14.5px;color:#1646a8;letter-spacing:0.4px;">Editar</div>
<svg style="left:530px;top:695px" width="23" height="25" viewBox="0 0 23 25"><path d="M8 20H3.2a1.6 1.6 0 0 1-1.6-1.6V3.2A1.6 1.6 0 0 1 3.2 1.6h12.6a1.6 1.6 0 0 1 1.6 1.6V11" fill="none" stroke="#333" stroke-width="2.2"/><circle cx="14.5" cy="17" r="4.3" fill="none" stroke="#333" stroke-width="2.2"/><path d="M17.6 20.2l3.6 3.6" stroke="#333" stroke-width="2.4"/></svg>
<div class="t " style="left:558.40px;top:699.83px;font-size:14.5px;color:#1646a8;letter-spacing:0.4px;">Buscar</div>
<svg style="left:639px;top:696px" width="19" height="22" viewBox="0 0 19 22"><path d="M0.5 3.2h18" stroke="#333" stroke-width="2.2"/><path d="M6.5 2.2V0.8h6v1.4" stroke="#333" stroke-width="1.8" fill="none"/><path d="M2.2 5.2h14.6l-1 15a1.5 1.5 0 0 1-1.5 1.3H4.7a1.5 1.5 0 0 1-1.5-1.3z" fill="#333"/><path d="M6.6 8v10.5M9.5 8v10.5M12.4 8v10.5" stroke="#fff" stroke-width="1.3"/></svg>
<div class="t " style="left:664.80px;top:699.83px;font-size:14.5px;color:#1646a8;letter-spacing:0.4px;">Eliminar</div>
<div class="a " style="left:741px;top:689px;width:98px;height:36px;background:#ececec;border:1px solid #7a7a7a;border-radius:3px;box-shadow:1px 1px 4px rgba(0,0,0,0.45);"></div>
<svg style="left:744px;top:695px" width="24" height="23" viewBox="0 0 24 23"><rect x="5" y="0" width="13" height="4.2" fill="#333"/><path d="M2 6h20a2 2 0 0 1 2 2v9h-5v5H5v-5H0V8a2 2 0 0 1 2-2z" fill="#333"/><rect x="7" y="15" width="10" height="5.5" fill="#f0f0f0"/><circle cx="20" cy="10" r="1.3" fill="#fff"/></svg>
<div class="t " style="left:772.50px;top:699.83px;font-size:14.5px;color:#1646a8;letter-spacing:0.4px;">Imprim</div>
<svg style="left:805px;top:684px" width="44" height="36" viewBox="0 0 44 36"><path d="M7.20 5.00 L15.47 14.07 L18.50 6.00 L17.69 14.46 L30.00 6.00 L18.90 15.92 L38.00 15.50 L19.09 17.26 L38.50 22.50 L17.52 19.64 L10.50 32.50 L14.16 19.29 L5.50 23.00 L13.20 17.76 L6.00 17.00 L13.42 15.65Z" fill="#f8dc5a" stroke="#e9a800" stroke-width="1.2" stroke-linejoin="miter"/></svg>
<svg style="left:820.6px;top:700.9px" width="20" height="30" viewBox="0 0 20 30"><path d="M1.50 1.50 L1.50 22.50 L6.66 17.46 L10.50 25.86 L13.50 24.54 L9.78 16.26 L15.90 16.26Z" fill="#fff" stroke="#111" stroke-width="1.3" stroke-linejoin="round" style="filter:drop-shadow(2px 3px 2px rgba(0,0,0,.45))"/></svg>
<div class="a " style="left:923px;top:690px;width:97px;height:34px;background:#f2f2f2;border-radius:3px;"></div>
<svg style="left:927px;top:698px" width="21" height="16" viewBox="0 0 21 16"><path d="M1.2 8.2l6 6L20 1.5" fill="none" stroke="#555" stroke-width="2.4"/></svg>
<div class="t " style="left:953.70px;top:699.83px;font-size:14.5px;color:#666;letter-spacing:0.4px;">Aceptar</div>
<div class="a " style="left:1031px;top:690px;width:96px;height:34px;background:#f2f2f2;border-radius:3px;"></div>
<svg style="left:1035px;top:698px" width="19" height="17" viewBox="0 0 19 17"><path d="M1.5 1l16 15.5M17.5 1l-16 15.5" stroke="#555" stroke-width="2.3"/></svg>
<div class="t " style="left:1060.60px;top:699.83px;font-size:14.5px;color:#666;letter-spacing:0.4px;">Cancelar</div>
</body></html>
